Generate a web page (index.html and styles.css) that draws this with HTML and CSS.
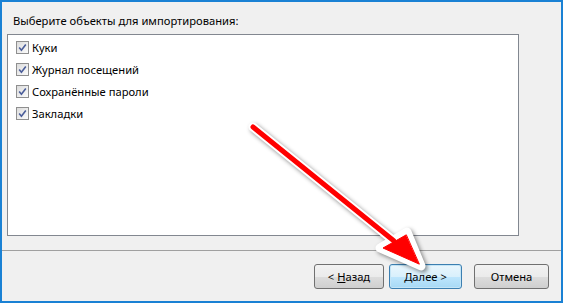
FILE: index.html
```html
<!DOCTYPE html>
<html lang="ru">

<head>
   <meta charset="UTF-8">
   <title>Импорт</title>
   <link rel="stylesheet" href="styles.css">
</head>

<body>
   <div class="window">
      <div class="content">
         <p class="label">Выберите объекты для импортирования:</p>
         <div class="list">
            <label class="item"><span class="check"><svg viewBox="0 0 13 13" width="13" height="13"><path d="M3.2 6.6 L5.4 9.2 L9.8 3.4" fill="none" stroke="#4a5d99" stroke-width="1.6" /></svg></span>Куки</label>
            <label class="item"><span class="check"><svg viewBox="0 0 13 13" width="13" height="13"><path d="M3.2 6.6 L5.4 9.2 L9.8 3.4" fill="none" stroke="#4a5d99" stroke-width="1.6" /></svg></span>Журнал посещений</label>
            <label class="item"><span class="check"><svg viewBox="0 0 13 13" width="13" height="13"><path d="M3.2 6.6 L5.4 9.2 L9.8 3.4" fill="none" stroke="#4a5d99" stroke-width="1.6" /></svg></span>Сохранённые пароли</label>
            <label class="item"><span class="check"><svg viewBox="0 0 13 13" width="13" height="13"><path d="M3.2 6.6 L5.4 9.2 L9.8 3.4" fill="none" stroke="#4a5d99" stroke-width="1.6" /></svg></span>Закладки</label>
         </div>
      </div>
      <div class="footer">
         <button class="btn btn-back">&lt; <u>Н</u>азад</button>
         <button class="btn btn-next"><u>Д</u>алее &gt;</button>
         <button class="btn btn-cancel">Отмена</button>
      </div>
   </div>

   <!-- pointer drawn over the dialog -->
   <svg class="arrow" width="563" height="303" viewBox="0 0 563 303">
      <g stroke="#fff" stroke-width="9" stroke-linecap="round" stroke-linejoin="round" fill="#fff">
         <line x1="253" y1="127" x2="394" y2="241" />
         <polygon points="421,266 380,248 407,232" />
      </g>
      <g stroke="#f00" stroke-width="5" stroke-linecap="round" stroke-linejoin="round" fill="#f00">
         <line x1="253" y1="127" x2="394" y2="241" />
         <polygon points="419,264 383,248 406,235" stroke-width="1" />
      </g>
   </svg>
</body>

</html>
```

FILE: styles.css
```css
html, body {
   margin: 0;
   padding: 0;
}

body {
   width: 563px;
   height: 303px;
   position: relative;
   font-family: "Noto Sans", "Open Sans", sans-serif;
   font-size: 11.2px;
   color: #000;
   background: #f0f0f0;
}

div.window {
   box-sizing: border-box;
   width: 563px;
   height: 303px;
   border: 2px solid #1a81d4;
   background: #f0f0f0;
   display: flex;
   flex-direction: column;
}

div.content {
   height: 249px;
   padding: 11px 0 0 5px;
   box-sizing: border-box;
   border-bottom: 1px solid #a0a0a0;
}

p.label {
   margin: 0 0 5px 6px;
   line-height: 16px;
}

div.list {
   box-sizing: border-box;
   width: 512px;
   height: 202px;
   border: 1px solid #828790;
   background: #fff;
   padding: 1px 0 0 8px;
   display: flex;
   flex-direction: column;
}

label.item {
   display: flex;
   align-items: center;
   height: 22px;
   gap: 3px;
}

span.check {
   box-sizing: border-box;
   width: 13px;
   height: 13px;
   border: 1px solid #8f8f8f;
   background: linear-gradient(135deg, #dcdcdc, #fbfbfb);
   display: flex;
}

span.check svg {
   margin: -1px;
}

div.footer {
   flex: 1;
   display: flex;
   justify-content: flex-end;
   align-items: flex-start;
   padding: 13px 12px 0 0;
}

button.btn {
   font-family: "Noto Sans", "Open Sans", sans-serif;
   font-size: 11.2px;
   height: 25px;
   border: 1px solid #707070;
   border-radius: 3px;
   background: linear-gradient(#f2f2f2 0%, #ebebeb 50%, #dddddd 51%, #cfcfcf 100%);
   padding: 0;
   color: #000;
}

button.btn-back {
   width: 70px;
}

button.btn-next {
   width: 73px;
   margin-left: 5px;
   border-color: #3c7fb1;
   background: linear-gradient(#eaf6fd 0%, #d9f0fc 50%, #bee6fd 51%, #a7d9f5 100%);
   box-shadow: inset 0 0 0 1px #c4e5f6;
}

button.btn-cancel {
   width: 75px;
   margin-left: 12px;
}

svg.arrow {
   position: absolute;
   left: 0;
   top: 0;
   filter: drop-shadow(2px 2px 2px rgba(0, 0, 0, 0.45));
}
```
